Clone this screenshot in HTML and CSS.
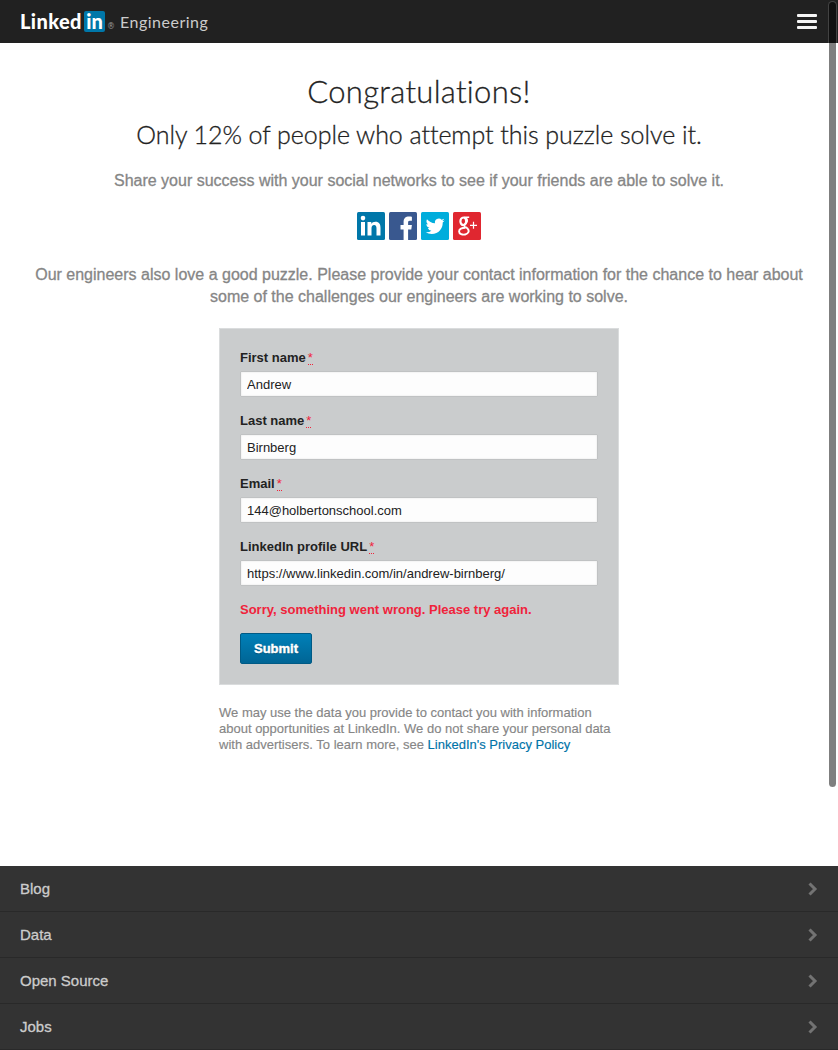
FILE: index.html
```html
<!DOCTYPE html>
<html lang="en">
<head>
<meta charset="utf-8">
<title>LinkedIn Engineering</title>
<link rel="stylesheet" href="styles.css">
</head>
<body>
<header class="topbar">
  <a class="brand">
    <span class="brand-name">Linked</span>
    <span class="brand-box">in</span>
    <span class="brand-reg">®</span>
    <span class="brand-unit">Engineering</span>
  </a>
  <span class="menu"><i class="bar"></i><i class="bar"></i><i class="bar"></i></span>
</header>
<main class="content">
  <h1 class="title">Congratulations!</h1>
  <h2 class="subtitle">Only 12% of people who attempt this puzzle solve it.</h2>
  <p class="lead share">Share your success with your social networks to see if your friends are able to solve it.</p>
  <div class="social">
    <svg width="28" height="28" viewBox="0 0 28 28"><rect width="28" height="28" rx="1.5" fill="#0077a9"/><g fill="#fff"><circle cx="6" cy="6.1" r="2.3"/><path d="M4 10h4v13.500H4zM10.500 10h3.800v1.900c.8-1.400 2.200-2.200 4.100-2.200 3.800 0 5.100 2.300 5.100 6.200v7.600h-4v-6.900c0-2.300-.6-3.500-2.300-3.500-1.900 0-2.700 1.300-2.700 3.500v6.900h-4z"/></g></svg>
    <svg width="28" height="28" viewBox="0 0 28 28"><rect width="28" height="28" rx="1.500" fill="#39588f"/><path fill="#fff" d="M14.600 28V17.400h-3.100V13h3.100v-2.900c0-3.700 2-5.500 5.400-5.500 1.300 0 2.400.1 2.900.2v3.900h-2.100c-1.400 0-1.700.7-1.700 1.800V13h3.800l-.6 4.400h-3.200V28z"/></svg>
    <svg width="28" height="28" viewBox="0 0 28 28"><rect width="28" height="28" rx="1.500" fill="#00addc"/><path fill="#fff" transform="translate(4.700 4.800) scale(.79)" d="M23.950 4.570a10 10 0 0 1-2.820.77 4.960 4.960 0 0 0 2.160-2.720c-.95.550-2 .95-3.130 1.180a4.920 4.920 0 0 0-8.380 4.480C7.690 8.100 4.070 6.130 1.640 3.160a4.820 4.820 0 0 0-.67 2.480c0 1.700.87 3.210 2.190 4.100a4.900 4.900 0 0 1-2.230-.62v.06a4.920 4.920 0 0 0 3.950 4.830 5 5 0 0 1-2.210.08 4.940 4.940 0 0 0 4.600 3.420A9.870 9.870 0 0 1 0 19.540a14 14 0 0 0 7.550 2.210c9.050 0 14-7.500 14-13.980 0-.21 0-.42-.02-.63a9.940 9.940 0 0 0 2.460-2.550z"/></svg>
    <svg width="28" height="28" viewBox="0 0 28 28"><rect width="28" height="28" rx="1.500" fill="#e02730"/><g fill="none" stroke="#fff"><ellipse cx="10.300" cy="9.300" rx="2.900" ry="3.800" stroke-width="2.200"/><path stroke-width="1.500" d="M11 5.300h5.200M13.300 6c1.700 2.300.6 4.800-1.200 6.200-1.500 1.200-.9 2.200.5 3.100"/><path stroke-width="1.900" d="M12.500 15c3.200 2 3.800 3.600 2.800 5.400-1.200 2.200-4.800 2.700-7.200 1.700-2.700-1.100-2.600-4.200-.2-5.500 1.300-.7 2.900-.9 4.500-.9"/><path stroke-width="1.200" d="M20.500 9.800v7M17 13.300h7"/></g></svg>
  </div>
  <p class="lead invite">Our engineers also love a good puzzle. Please provide your contact information for the chance to hear about<br>some of the challenges our engineers are working to solve.</p>
  <form class="card">
    <label class="label">First name<abbr class="req">*</abbr></label>
    <input class="field" value="Andrew">
    <label class="label">Last name<abbr class="req">*</abbr></label>
    <input class="field" value="Birnberg">
    <label class="label">Email<abbr class="req">*</abbr></label>
    <input class="field" value="144@holbertonschool.com">
    <label class="label">LinkedIn profile URL<abbr class="req">*</abbr></label>
    <input class="field" value="https://www.linkedin.com/in/andrew-birnberg/">
    <p class="error">Sorry, something went wrong. Please try again.</p>
    <button class="submit" type="button">Submit</button>
  </form>
  <p class="note">We may use the data you provide to contact you with information<br>about opportunities at LinkedIn. We do not share your personal data<br>with advertisers. To learn more, see <a class="link">LinkedIn's Privacy Policy</a></p>
</main>
<nav class="links">
  <a class="row">Blog<svg class="chev" width="10" height="14" viewBox="0 0 10 14"><path d="M1.500 1.500 7 7l-5.500 5.500"/></svg></a>
  <a class="row">Data<svg class="chev" width="10" height="14" viewBox="0 0 10 14"><path d="M1.500 1.500 7 7l-5.500 5.500"/></svg></a>
  <a class="row">Open Source<svg class="chev" width="10" height="14" viewBox="0 0 10 14"><path d="M1.500 1.500 7 7l-5.500 5.500"/></svg></a>
  <a class="row">Jobs<svg class="chev" width="10" height="14" viewBox="0 0 10 14"><path d="M1.500 1.500 7 7l-5.500 5.500"/></svg></a>
</nav>
<div class="scroll-thumb"></div>
</body>
</html>
```
FILE: styles.css
```css
* { box-sizing: border-box; margin: 0; padding: 0; }
body {
  height: 1050px;
  overflow: hidden;
  display: flex;
  flex-direction: column;
  background: #fff;
  font-family: "Liberation Sans", Arial, sans-serif;
}
.topbar {
  height: 43px;
  flex: none;
  background: #212121;
  display: flex;
  justify-content: space-between;
  align-items: center;
  padding: 0 21px 0 20px;
}
.brand { display: flex; align-items: center; height: 43px; color: #fff; font-family: Lato, sans-serif; }
.brand-name { font-size: 20px; font-weight: 900; width: 64px; line-height: 43px; letter-spacing: 0.4px; }
.brand-box {
  width: 21px; height: 21px; border-radius: 2px; background: #0077a9;
  font-size: 20px; font-weight: 900; line-height: 20px; text-align: center;
}
.brand-reg { font-family: "DejaVu Sans", sans-serif; font-size: 8px; color: #999; width: 15px; padding: 9px 0 0 2px; }
.brand-unit { font-size: 16px; line-height: 44px; color: #ccc; letter-spacing: 0.5px; }
.menu { display: flex; flex-direction: column; gap: 3px; }
.bar { width: 20px; height: 3px; border-radius: 1px; background: #f5f5f5; }
.content { flex: 1; display: flex; flex-direction: column; align-items: center; }
.title { font: 300 31px/40px Lato, sans-serif; color: #222; letter-spacing: 0.3px; margin-top: 28px; white-space: nowrap; -webkit-text-stroke: 0.3px #222; }
.subtitle { font: 300 25px/32px Lato, sans-serif; color: #222; letter-spacing: -0.05px; margin-top: 7px; white-space: nowrap; -webkit-text-stroke: 0.3px #222; }
.lead { font-size: 16px; line-height: 22px; color: #868686; text-align: center; white-space: nowrap; -webkit-text-stroke: 0.3px #868686; }
.share { margin-top: 20px; }
.social { display: flex; gap: 4px; margin-top: 20px; height: 28px; }
.invite { margin-top: 24px; }
.card {
  width: 400px; height: 357px; margin-top: 20px; padding: 20px;
  display: flex; flex-direction: column; align-items: flex-start;
  background: #cacccd; border: 1px solid #dadcdd;
}
.label { height: 22px; font-size: 13px; font-weight: bold; line-height: 18px; color: #222; }
.req { font-weight: normal; color: #f0233b; border-bottom: 1px dotted #f0233b; margin-left: 2px; line-height: 12px; display: inline-block; height: 13px; }
.field {
  width: 358px; height: 26px; margin-bottom: 15px; padding: 0 6px;
  border: 1px solid #c0c2c3; border-radius: 1px; background: #fdfdfd;
  box-shadow: inset 0 0 2px rgba(0, 0, 0, .12);
  font: 13px "Liberation Sans", Arial, sans-serif; color: #222;
}
.error { font-size: 13px; font-weight: bold; line-height: 18px; color: #f0233b; white-space: nowrap; }
.submit {
  width: 72px; height: 31px; margin-top: 14px;
  border: 1px solid #005a85; border-radius: 2px;
  background: linear-gradient(#0080b8, #006595);
  color: #fff; font: bold 13px "Liberation Sans", Arial, sans-serif;
  text-shadow: 0 1px 1px rgba(0, 0, 0, .3); -webkit-text-stroke: 0.4px #fff;
}
.note { width: 400px; margin-top: 20px; font-size: 13px; line-height: 16px; color: #868686; white-space: nowrap; -webkit-text-stroke: 0.15px; }
.link { color: #0073a8; }
.links { flex: none; height: 184px; background: #333; }
.row {
  display: flex; align-items: center; justify-content: space-between;
  height: 46px; padding: 0 20px 0 20px; border-bottom: 1px solid #292929;
  font-size: 15px; color: #ccc; -webkit-text-stroke: 0.3px #ccc;
}
.chev { fill: none; stroke: #737373; stroke-width: 3; }
.scroll-thumb {
  position: absolute; left: 828px; top: 1px; width: 9px; height: 787px;
  border-radius: 5px; background: rgba(0, 0, 0, .5); border: 1px solid rgba(255, 255, 255, .15);
  background-clip: padding-box;
}
```
